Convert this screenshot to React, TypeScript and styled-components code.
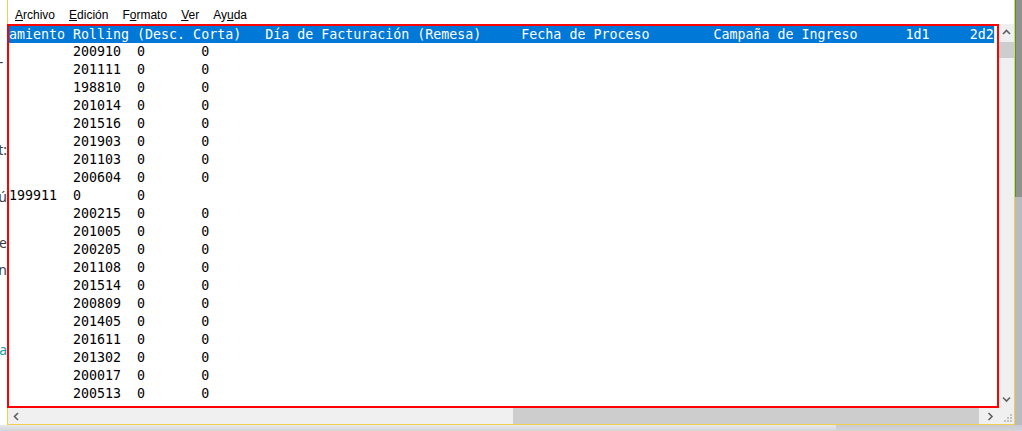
import styled, { createGlobalStyle } from 'styled-components'

const GlobalStyle = createGlobalStyle`
  html, body {
    margin: 0;
    padding: 0;
    background: #ffffff;
  }
`

const Screen = styled.div`
  width: 1022px;
  height: 431px;
  display: flex;
  flex-direction: column;
  overflow: hidden;
  background: #ffffff;
`
const TopRow = styled.div`
  display: flex;
  height: 425px;
`
const BehindStrip = styled.div`
  width: 7px;
  display: flex;
  flex-direction: column;
  overflow: hidden;
  background: #ffffff;
`
const Fragment = styled.div<{ $gap: number; $color?: string }>`
  height: 18px;
  margin-top: ${(p) => p.$gap}px;
  display: flex;
  justify-content: flex-end;
  white-space: nowrap;
  font-family: 'Noto Sans', sans-serif;
  font-size: 14px;
  line-height: 18px;
  color: ${(p) => p.$color || '#3c3c3c'};
`
const Window = styled.div`
  width: 1006px;
  display: flex;
  flex-direction: column;
  border: 1px solid #f2cd4f;
  border-top: none;
`
const MenuBar = styled.div`
  height: 24px;
  display: flex;
  background: #ffffff;
  font-family: 'Liberation Sans', 'Noto Sans', sans-serif;
  font-size: 12px;
  color: #000000;
`
const MenuItem = styled.div`
  padding: 5px 7px 0 7px;
  line-height: 20px;
`
const Body = styled.div`
  flex: 1;
  display: grid;
  grid-template-columns: 1fr 15px;
  grid-template-rows: 1fr 16px;
`
const TextPane = styled.div`
  margin-left: -1px;
  border: 2px solid #ff0000;
  overflow: hidden;
  background: #ffffff;
  font-family: 'DejaVu Sans Mono', 'Liberation Mono', monospace;
  font-size: 13.3px;
  color: #000000;
  white-space: pre;
`
const HeaderLine = styled.div`
  height: 17px;
  line-height: 17px;
  display: flex;
`
const Selected = styled.span`
  background: #0078d7;
  color: #ffffff;
`
const Caret = styled.span`
  width: 1px;
  height: 17px;
  background: #e8e8e8;
`
const Line = styled.div`
  height: 18px;
  line-height: 18px;
`
const VScroll = styled.div`
  background: #f0f0f0;
  display: flex;
  flex-direction: column;
`
const HScroll = styled.div`
  background: #f0f0f0;
  display: flex;
  align-items: stretch;
`
const ArrowBox = styled.div<{ $vertical?: boolean }>`
  width: ${(p) => (p.$vertical ? '15px' : '17px')};
  height: ${(p) => (p.$vertical ? '17px' : '16px')};
  display: flex;
  align-items: center;
  justify-content: center;
  flex-shrink: 0;
`
const Track = styled.div<{ $vertical?: boolean }>`
  flex: 1;
  display: flex;
  flex-direction: ${(p) => (p.$vertical ? 'column' : 'row')};
`
const Thumb = styled.div<{ $vertical?: boolean; $offset: number; $size: number }>`
  background: #cdcdcd;
  ${(p) =>
    p.$vertical
      ? `margin-top: ${p.$offset}px; height: ${p.$size}px; width: 100%;`
      : `margin-left: ${p.$offset}px; width: ${p.$size}px; height: 100%;`}
`
const Corner = styled.div`
  background: #f0f0f0;
  display: flex;
  align-items: flex-end;
  justify-content: flex-end;
  padding: 0 2px 2px 0;
`
const RightStrip = styled.div`
  flex: 1;
  display: flex;
  flex-direction: column;
`
const RightTop = styled.div`
  height: 197px;
  background: #8f9194;
  border-left: 1px solid #3a9a4a;
`
const RightBottom = styled.div`
  flex: 1;
  background: #b9bcbf;
`
const Shadow = styled.div`
  flex: 1;
  display: flex;
`
const ShadowPart = styled.div<{ $width?: number; $tone: string }>`
  ${(p) => (p.$width ? `width: ${p.$width}px;` : 'flex: 1;')}
  background: linear-gradient(${(p) => p.$tone}, #d2d5d8);
`

const Chevron = ({ dir }: { dir: 'up' | 'down' | 'left' | 'right' }) => {
  const d = {
    up: 'M1 5 L4.5 1.5 L8 5',
    down: 'M1 1.5 L4.5 5 L8 1.5',
    left: 'M5 1 L1.5 4.5 L5 8',
    right: 'M1.5 1 L5 4.5 L1.5 8',
  }[dir]
  const vertical = dir === 'up' || dir === 'down'
  return (
    <svg width={vertical ? 9 : 7} height={vertical ? 7 : 9} viewBox={vertical ? '0 0 9 7' : '0 0 7 9'}>
      <path d={d} fill="none" stroke="#606060" strokeWidth="1.6" />
    </svg>
  )
}

const Grip = () => (
  <svg width="9" height="9" viewBox="0 0 9 9">
    {[
      [7, 1],
      [4, 4],
      [7, 4],
      [1, 7],
      [4, 7],
      [7, 7],
    ].map(([x, y]) => (
      <rect key={`${x}-${y}`} x={x} y={y} width="2" height="2" fill="#c2c2c2" />
    ))}
  </svg>
)

const header =
  'amiento Rolling (Desc. Corta)   Día de Facturación (Remesa)     Fecha de Proceso        Campaña de Ingreso      1d1     2d2'

const rows = [
  '        200910  0       0',
  '        201111  0       0',
  '        198810  0       0',
  '        201014  0       0',
  '        201516  0       0',
  '        201903  0       0',
  '        201103  0       0',
  '        200604  0       0',
  '199911  0       0',
  '        200215  0       0',
  '        201005  0       0',
  '        200205  0       0',
  '        201108  0       0',
  '        201514  0       0',
  '        200809  0       0',
  '        201405  0       0',
  '        201611  0       0',
  '        201302  0       0',
  '        200017  0       0',
  '        200513  0       0',
]

const menus = [
  { pre: '', key: 'A', post: 'rchivo' },
  { pre: '', key: 'E', post: 'dición' },
  { pre: 'F', key: 'o', post: 'rmato' },
  { pre: '', key: 'V', post: 'er' },
  { pre: 'Ay', key: 'u', post: 'da' },
]

export default function App() {
  return (
    <Screen>
      <GlobalStyle />
      <TopRow>
        <BehindStrip>
          <Fragment $gap={53}>-&nbsp;</Fragment>
          <Fragment $gap={70}>t:</Fragment>
          <Fragment $gap={29}>ú</Fragment>
          <Fragment $gap={28}>e</Fragment>
          <Fragment $gap={9}>n</Fragment>
          <Fragment $gap={62} $color="#1a9aa8">a</Fragment>
        </BehindStrip>
        <Window>
          <MenuBar>
            {menus.map((m) => (
              <MenuItem key={m.key + m.post}>
                {m.pre}
                <u>{m.key}</u>
                {m.post}
              </MenuItem>
            ))}
          </MenuBar>
          <Body>
            <TextPane>
              <HeaderLine>
                <Selected>{header}</Selected>
                <Caret />
              </HeaderLine>
              {rows.map((r, i) => (
                <Line key={i}>{r}</Line>
              ))}
            </TextPane>
            <VScroll>
              <ArrowBox $vertical>
                <Chevron dir="up" />
              </ArrowBox>
              <Track $vertical>
                <Thumb $vertical $offset={1} $size={16} />
              </Track>
              <ArrowBox $vertical>
                <Chevron dir="down" />
              </ArrowBox>
            </VScroll>
            <HScroll>
              <ArrowBox>
                <Chevron dir="left" />
              </ArrowBox>
              <Track>
                <Thumb $offset={488} $size={466} />
              </Track>
              <ArrowBox>
                <Chevron dir="right" />
              </ArrowBox>
            </HScroll>
            <Corner>
              <Grip />
            </Corner>
          </Body>
        </Window>
        <RightStrip>
          <RightTop />
          <RightBottom />
        </RightStrip>
      </TopRow>
      <Shadow>
        <ShadowPart $width={836} $tone="#e6e8ea" />
        <ShadowPart $tone="#c8ccd0" />
      </Shadow>
    </Screen>
  )
}
